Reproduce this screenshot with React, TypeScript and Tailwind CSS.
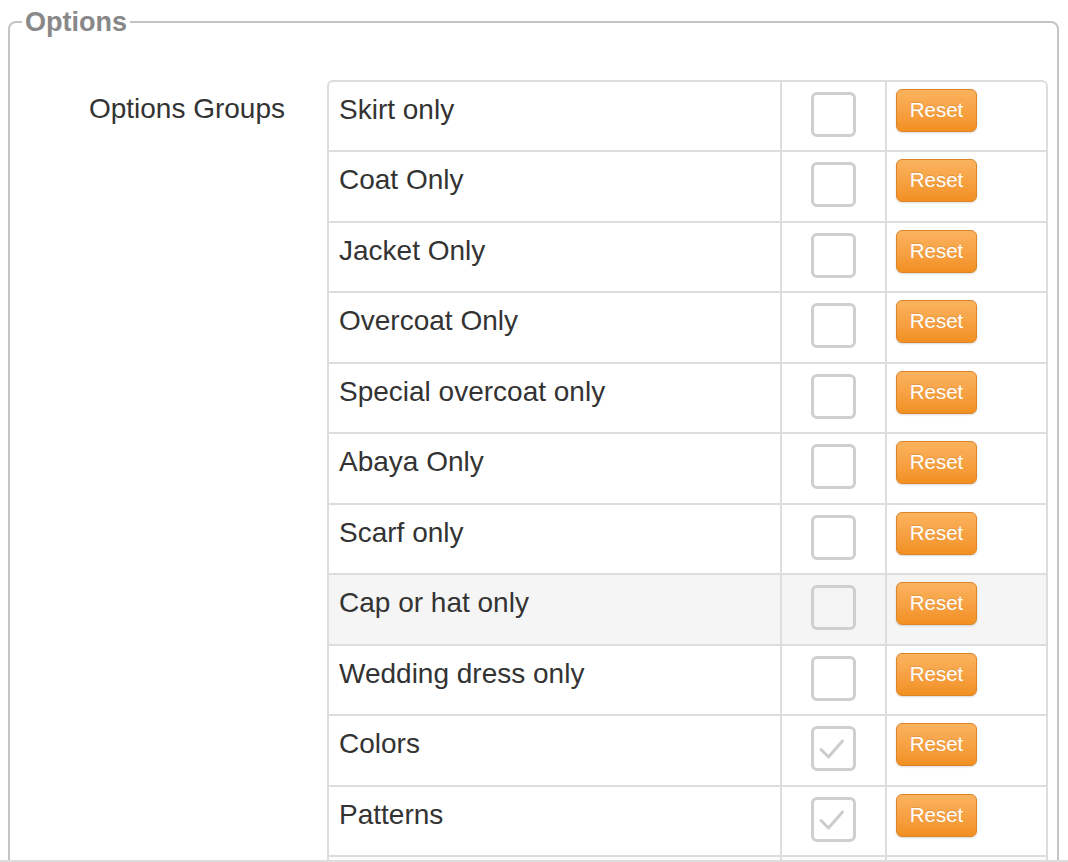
type OptionGroup = {
  name: string;
  checked?: boolean;
  active?: boolean;
};

const groups: OptionGroup[] = [
  { name: 'Skirt only' },
  { name: 'Coat Only' },
  { name: 'Jacket Only' },
  { name: 'Overcoat Only' },
  { name: 'Special overcoat only' },
  { name: 'Abaya Only' },
  { name: 'Scarf only' },
  { name: 'Cap or hat only', active: true },
  { name: 'Wedding dress only' },
  { name: 'Colors', checked: true },
  { name: 'Patterns', checked: true },
];

function Checkbox({ checked }: { checked?: boolean }) {
  return (
    <div className="flex h-[45px] w-[45px] items-center justify-center rounded-[6px] border-[3px] border-[#cfcfcf]">
      {checked && (
        <svg width="39" height="39" viewBox="0 0 39 39" fill="none">
          <path
            d="M7 20.5 L14.5 28 L28.5 12"
            stroke="#cccccc"
            strokeWidth="3"
            strokeLinecap="round"
            strokeLinejoin="round"
          />
        </svg>
      )}
    </div>
  );
}

function ResetButton() {
  return (
    <button
      type="button"
      className="h-[43px] w-[81px] rounded-[6px] border border-[#dc8427] bg-linear-to-b from-[#fbb35e] to-[#f29020] text-[20.5px] leading-none text-white shadow-[0_1px_2px_rgba(0,0,0,0.15)] [text-shadow:0_-1px_0_rgba(0,0,0,0.1)]"
    >
      Reset
    </button>
  );
}

export default function App() {
  return (
    <div className="h-[862px] overflow-hidden border-b-2 border-[#dddddd] bg-white font-['Liberation_Sans',Arial,sans-serif] text-[#333333]">
      <fieldset className="ml-[8px] mr-[9px] rounded-[8px] border-2 border-[#c4c4c4] px-0 pb-4">
        <legend className="ml-[12px] px-[3px] text-[27px] font-bold leading-[44px] text-[#888888]">
          Options
        </legend>

        <div className="flex pt-[36px]">
          <div className="w-[317px] pr-[42px] pt-[9px] text-right text-[28px] leading-[40px]">
            Options Groups
          </div>

          <div className="w-[721px] rounded-t-[6px] border-2 border-b-0 border-[#dddddd]">
            {groups.map((group, index) => (
              <div
                key={group.name}
                className={`flex ${
                  index === 0 ? 'h-[68px]' : 'h-[70.5px] border-t-2 border-[#dddddd]'
                } ${group.active ? 'bg-[#f5f5f5]' : ''}`}
              >
                <div className="w-[451px] pl-[10px] pt-[8px] text-[28px] leading-[40px]">
                  {group.name}
                </div>
                <div className="flex w-[105px] justify-center border-l-2 border-[#dddddd] pt-[10px]">
                  <Checkbox checked={group.checked} />
                </div>
                <div className="flex-1 border-l-2 border-[#dddddd] pl-[9px] pt-[7px]">
                  <ResetButton />
                </div>
              </div>
            ))}
            {/* next row begins just above the fold */}
            <div className="flex h-[70.5px] border-t-2 border-[#dddddd]">
              <div className="w-[451px]" />
              <div className="w-[105px] border-l-2 border-[#dddddd]" />
              <div className="flex-1 border-l-2 border-[#dddddd]" />
            </div>
          </div>
        </div>
      </fieldset>
    </div>
  );
}
